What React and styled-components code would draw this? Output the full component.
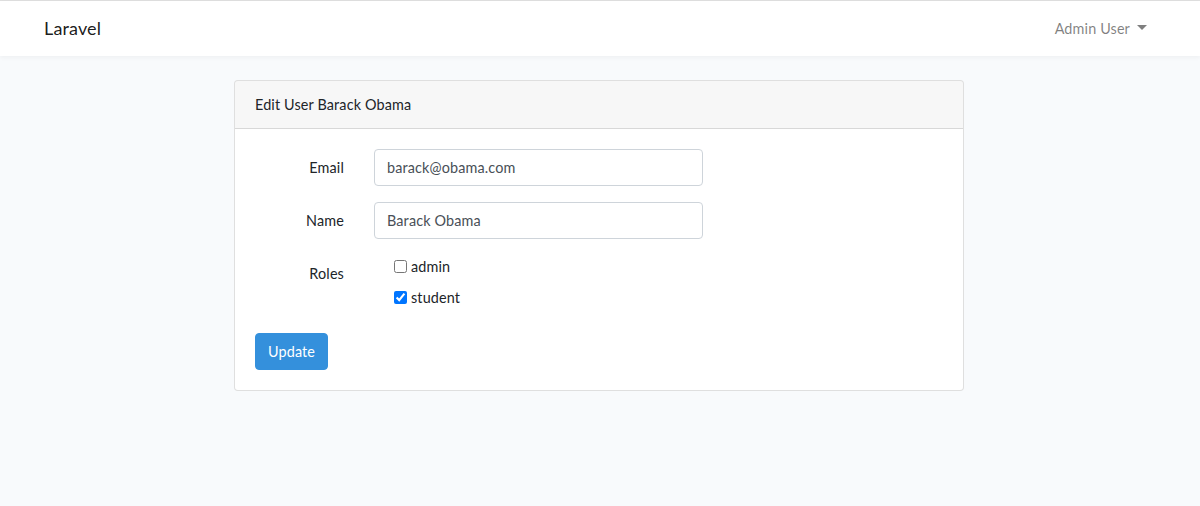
import React from "react";
import styled, { createGlobalStyle } from "styled-components";

const Global = createGlobalStyle`
  html, body { margin: 0; padding: 0; }
  body {
    background: #f8fafc;
    font-family: Lato, "Noto Sans", sans-serif;
    font-size: 14.4px;
    line-height: 1.6;
    letter-spacing: 0.14px;
    color: #212529;
  }
  * { box-sizing: border-box; }
`;

const Page = styled.div`
  min-height: 506px;
  border-top: 1px solid #dedede;
`;

const Navbar = styled.nav`
  background: #fff;
  box-shadow: 0 2px 4px rgba(0, 0, 0, 0.04);
  padding: 8px 0;
`;

const Container = styled.div`
  max-width: 1140px;
  margin: 0 auto;
  padding: 0 15px;
  display: flex;
  align-items: center;
  justify-content: ${(p) => p.$justify || "flex-start"};
`;

const Brand = styled.a`
  font-size: 18px;
  line-height: 1.6;
  padding: 5px 0;
  margin-left: -1px;
  color: rgba(0, 0, 0, 0.9);
  text-decoration: none;
`;

const UserLink = styled.a`
  display: flex;
  align-items: center;
  gap: 7px;
  padding: 8px;
  color: rgba(0, 0, 0, 0.5);
  text-decoration: none;
  line-height: 1.6;
`;

const Caret = styled.span`
  width: 0;
  height: 0;
  border-top: 5px solid rgba(0, 0, 0, 0.5);
  border-left: 5px solid transparent;
  border-right: 5px solid transparent;
  margin-top: -2px;
`;

const Main = styled.main`
  padding: 24px 0;
`;

const Card = styled.div`
  width: 730px;
  margin: 0 auto;
  background: #fff;
  border: 1px solid rgba(0, 0, 0, 0.125);
  border-radius: 4px;
  transform: translateX(-1px);
`;

const CardHeader = styled.div`
  padding: 12px 20px;
  background: rgba(0, 0, 0, 0.03);
  border-bottom: 1px solid rgba(0, 0, 0, 0.125);
  border-radius: 3px 3px 0 0;
`;

const CardBody = styled.div`
  padding: 20px;
`;

const FormRow = styled.div`
  display: grid;
  grid-template-columns: 89px 329px;
  column-gap: 30px;
  margin-bottom: 16px;
`;

const Label = styled.label`
  text-align: right;
  padding-top: 7px;
  padding-bottom: 7px;
  line-height: 1.6;
`;

const Input = styled.input`
  display: block;
  width: 329px;
  height: 37px;
  padding: 6px 12px;
  font: inherit;
  font-size: 14.4px;
  line-height: 1.6;
  letter-spacing: 0.14px;
  color: #495057;
  background: #fff;
  border: 1px solid #ced4da;
  border-radius: 4px;
  outline: none;
`;

const Checks = styled.div`
  display: flex;
  flex-direction: column;
  gap: 8px;
  padding-bottom: 8px;
`;

const Check = styled.label`
  display: flex;
  align-items: center;
  position: relative;
  padding-left: 20px;
  line-height: 1.6;
`;

const CheckBox = styled.input`
  position: absolute;
  left: 20px;
  top: 5px;
  width: 13px;
  height: 13px;
  margin: 0;
  accent-color: #0075ff;
`;

const CheckText = styled.span`
  padding-left: 17px;
`;

const Button = styled.button`
  font: inherit;
  font-size: 14.4px;
  line-height: 1.6;
  letter-spacing: 0.14px;
  padding: 6px 12px;
  color: #fff;
  background: #3490dc;
  border: 1px solid #3490dc;
  border-radius: 4px;
  cursor: pointer;
`;

export default function App() {
  return (
    <Page>
      <Global />
      <Navbar>
        <Container $justify="space-between">
          <Brand href="#">Laravel</Brand>
          <UserLink href="#">
            Admin User <Caret />
          </UserLink>
        </Container>
      </Navbar>
      <Main>
        <Card>
          <CardHeader>Edit User Barack Obama</CardHeader>
          <CardBody>
            <FormRow>
              <Label htmlFor="email">Email</Label>
              <Input id="email" type="email" defaultValue="barack@obama.com" />
            </FormRow>
            <FormRow>
              <Label htmlFor="name">Name</Label>
              <Input id="name" type="text" defaultValue="Barack Obama" />
            </FormRow>
            <FormRow>
              <Label>Roles</Label>
              <Checks>
                <Check>
                  <CheckBox type="checkbox" />
                  <CheckText>admin</CheckText>
                </Check>
                <Check>
                  <CheckBox type="checkbox" defaultChecked />
                  <CheckText>student</CheckText>
                </Check>
              </Checks>
            </FormRow>
            <Button type="submit">Update</Button>
          </CardBody>
        </Card>
      </Main>
    </Page>
  );
}
